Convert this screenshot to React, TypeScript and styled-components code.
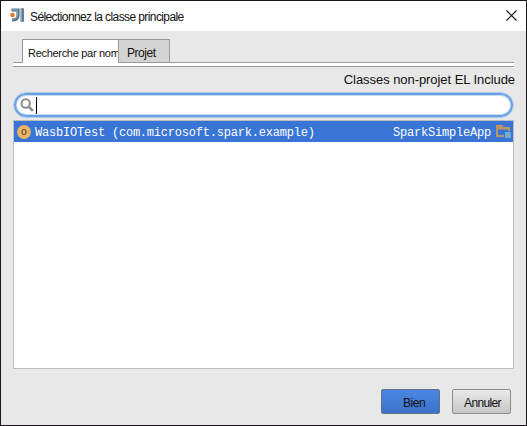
import React from 'react';
import styled, { createGlobalStyle } from 'styled-components';

const GlobalStyle = createGlobalStyle`
  * { box-sizing: border-box; }
  body { margin: 0; font-family: "Liberation Sans", Arial, sans-serif; color: #111; }
  svg { flex: none; }
`;

const Dialog = styled.main`
  width: 527px;
  height: 426px;
  display: flex;
  flex-direction: column;
  background: #e8e8e8;
  border: 1px solid #17151a;
  overflow: hidden;
`;

const TitleBar = styled.header`
  height: 30px;
  flex: none;
  display: flex;
  align-items: center;
  padding: 0 9px 0 8px;
  background: #fff;
`;

const Title = styled.h1`
  margin: 2px auto 0 5px;
  font-size: 12px;
  font-weight: 400;
  line-height: 16px;
  letter-spacing: -0.6px;
  white-space: nowrap;
`;

const CloseButton = styled.button`
  display: flex;
  margin-bottom: 2px;
  padding: 0;
  border: 0;
  background: none;
`;

const Content = styled.section`
  display: flex;
  flex-direction: column;
  padding: 8px 12px 0;
`;

const Tabs = styled.nav`
  height: 24px;
  display: flex;
  padding-left: 9px;
  box-shadow: inset 0 -1px #9c9c9c;
`;

const Tab = styled.button<{ $active?: boolean }>`
  width: ${p => (p.$active ? 96 : 52)}px;
  height: 24px;
  padding: ${p => (p.$active ? '3px 0 0 5px' : '3px 0 0 8px')};
  border: 1px solid #999;
  border-right-width: ${p => (p.$active ? 0 : 1)}px;
  border-bottom-width: ${p => (p.$active ? 0 : 1)}px;
  background: ${p => (p.$active ? '#fff' : '#d4d4d4')};
  color: #111;
  font-family: inherit;
  font-size: ${p => (p.$active ? 11 : 12)}px;
  letter-spacing: ${p => (p.$active ? -0.3 : -0.45)}px;
  line-height: 16px;
  text-align: left;
  white-space: nowrap;
`;

const TabStrip = styled.div`
  height: 4px;
  background: #fff;
  border-bottom: 1px solid #999;
`;

const IncludeLabel = styled.div`
  height: 25px;
  padding-top: 4px;
  margin-right: -1px;
  text-align: right;
  font-size: 13px;
  line-height: 17px;
  letter-spacing: -0.06px;
`;

const SearchField = styled.label`
  height: 26px;
  display: flex;
  align-items: center;
  gap: 2px;
  padding-left: 6px;
  border: 1px solid #a9c9ec;
  border-radius: 13px;
  background: #fff;
  box-shadow: inset 0 0 0 2px #6ba2df, inset 0 0 0 3px #c4daf4;
`;

const Caret = styled.span`
  width: 1px;
  height: 17px;
  background: #000;
`;

const ResultList = styled.div`
  height: 249px;
  margin-top: 2px;
  border: 1px solid #bdbdbd;
  background: #fff;
`;

const ResultRow = styled.div`
  height: 21px;
  display: flex;
  align-items: center;
  padding: 0 2px 0 3px;
  background: #3875d7;
  color: #fff;
  font: 12px/16px "Liberation Mono", "Courier New", monospace;
  letter-spacing: -0.21px;
  white-space: pre;
`;

const ClassName = styled.span`
  margin: 2px auto 0 4px;
`;

const ModuleName = styled.span`
  margin: 2px 5px 0 0;
`;

const Actions = styled.footer`
  display: flex;
  justify-content: flex-end;
  gap: 12px;
  padding: 20px 15px 0 0;
`;

const ActionButton = styled.button<{ $primary?: boolean }>`
  width: 59px;
  height: 25px;
  padding: ${p => (p.$primary ? '3px 0 0 7px' : '3px 0 0 2px')};
  border: 1px solid ${p => (p.$primary ? '#62708a' : '#8d8d8d')};
  border-radius: 2px;
  background: ${p => (p.$primary
    ? 'linear-gradient(#4a87e2, #3b72ca)'
    : 'linear-gradient(#e9e9e9, #c6c6c6)')};
  color: #111;
  font: 12px/16px "Liberation Sans", Arial, sans-serif;
  letter-spacing: ${p => (p.$primary ? -0.45 : -0.65)}px;
`;

const AppLogo = () => (
  <svg width="16" height="16" viewBox="0 0 16 16">
    <path d="M2.5 2H9v5.5Q9 12 3 12" fill="none" stroke="#58758a" strokeWidth="3.2" />
    <path d="M2 1.8h6.3v5.7q0 3.5-5.3 3.8" fill="none" stroke="#8facbc" strokeWidth="1" />
    <path d="M13.2 .3v13.5" stroke="#58758a" strokeWidth="3.4" />
    <path d="M12.5 1v12" stroke="#8facbc" strokeWidth="1" />
    <circle cx="3.5" cy="7" r="2.2" fill="#e87912" />
  </svg>
);

const CloseIcon = () => (
  <svg width="11" height="11" viewBox="0 0 11 11">
    <path d="M.5 .5l10 10M10.5 .5l-10 10" stroke="#111" strokeWidth="1.15" />
  </svg>
);

const SearchIcon = () => (
  <svg width="14" height="14" viewBox="0 0 14 14">
    <circle cx="5.7" cy="5.5" r="4.2" fill="none" stroke="#8b8b8b" strokeWidth="2" />
    <path d="M8.7 8.7l4.1 4.1" stroke="#8b8b8b" strokeWidth="2.4" />
  </svg>
);

const ObjectIcon = () => (
  <svg width="14" height="14" viewBox="0 0 14 14">
    <circle cx="7" cy="7" r="6.9" fill="#eeb365" />
    <ellipse cx="7" cy="7" rx="2.1" ry="2.5" fill="none" stroke="#65533c" strokeWidth="1.1" />
  </svg>
);

const ModuleIcon = () => (
  <svg width="15" height="13" viewBox="0 0 15 13">
    <path d="M0 0h6.5l1.3 2H14v10H0zM2 4.5V10h10V4.5z" fill="#ba9565" fillRule="evenodd" />
    <path d="M8 6h7v7H8z" fill="#3875d7" />
    <path d="M9 7h6v6H9z" fill="#70add1" />
  </svg>
);

export default function App() {
  return (
    <>
      <GlobalStyle />
      <Dialog>
        <TitleBar>
          <AppLogo />
          <Title>Sélectionnez la classe principale</Title>
          <CloseButton aria-label="Fermer"><CloseIcon /></CloseButton>
        </TitleBar>
        <Content>
          <Tabs>
            <Tab $active>Recherche par nom</Tab>
            <Tab>Projet</Tab>
          </Tabs>
          <TabStrip />
          <IncludeLabel>Classes non-projet EL Include</IncludeLabel>
          <SearchField>
            <SearchIcon />
            <Caret />
          </SearchField>
          <ResultList>
            <ResultRow>
              <ObjectIcon />
              <ClassName>WasbIOTest (com.microsoft.spark.example)</ClassName>
              <ModuleName>SparkSimpleApp</ModuleName>
              <ModuleIcon />
            </ResultRow>
          </ResultList>
        </Content>
        <Actions>
          <ActionButton $primary>Bien</ActionButton>
          <ActionButton>Annuler</ActionButton>
        </Actions>
      </Dialog>
    </>
  );
}
